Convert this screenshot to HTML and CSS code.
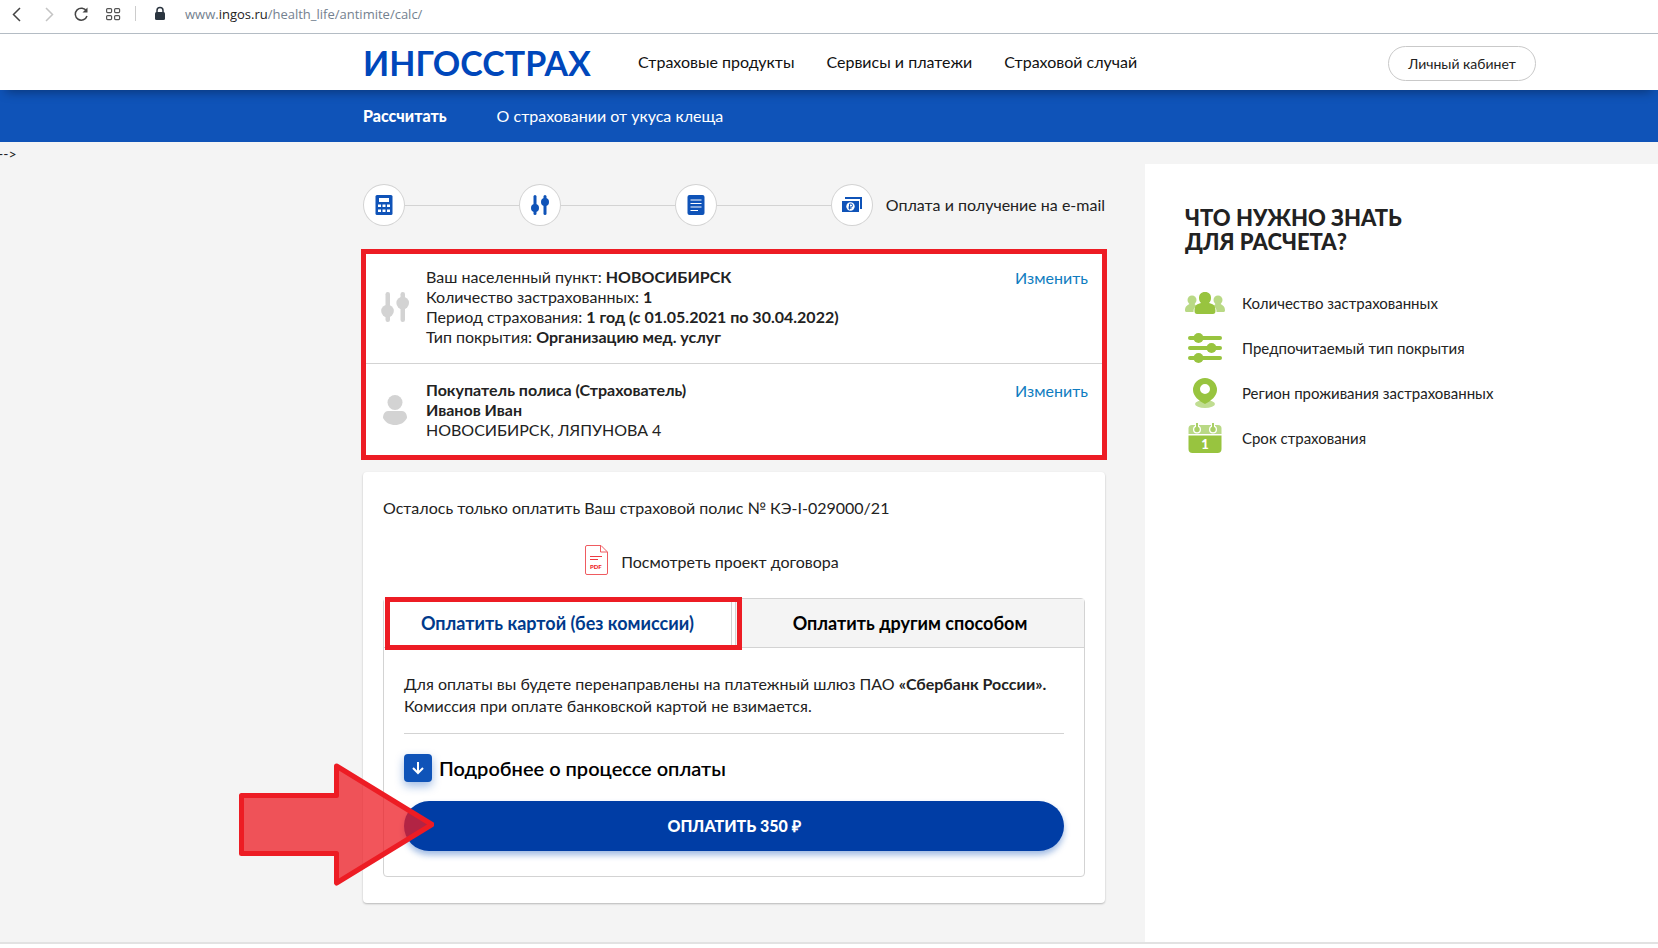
FILE: index.html
```html
<!DOCTYPE html>
<html lang="ru">
<head>
<meta charset="utf-8">
<title>Ингосстрах — оплата полиса</title>
<link rel="stylesheet" href="styles.css">
</head>
<body>
<div class="browser-bar">
  <button class="tool" aria-label="Назад"><svg width="22" height="22" viewBox="0 0 22 22"><path d="M14 5 7.500 11.500 14 18" fill="none" stroke="#444" stroke-width="1.500"/></svg></button>
  <button class="tool" aria-label="Вперёд"><svg width="22" height="22" viewBox="0 0 22 22"><path d="M8 5 14.500 11.500 8 18" fill="none" stroke="#c4c4c4" stroke-width="1.500"/></svg></button>
  <button class="tool" aria-label="Обновить"><svg width="22" height="22" viewBox="0 0 22 22"><path d="M16.500 8.200A6 6 0 1 0 17 13" fill="none" stroke="#444" stroke-width="1.500"/><path d="M17.500 4.500v5h-5z" fill="#444"/></svg></button>
  <button class="tool" aria-label="Плитка"><svg width="22" height="22" viewBox="0 0 22 22"><g fill="none" stroke="#555" stroke-width="1.200"><rect x="4.600" y="5.600" width="5" height="4" rx="1"/><rect x="12.600" y="5.600" width="5" height="4" rx="1"/><rect x="4.600" y="12.600" width="5" height="4" rx="1"/><rect x="12.600" y="12.600" width="5" height="4" rx="1"/></g></svg></button>
  <span class="bar-sep"></span>
  <svg class="lock" width="12" height="16" viewBox="0 0 12 16"><path d="M3 7V4.500a3 3 0 0 1 6 0V7" fill="none" stroke="#2b3540" stroke-width="1.500"/><rect x="1" y="6" width="10" height="8" rx="1.500" fill="#2b3540"/></svg>
  <span class="url">www.<b>ingos.ru</b>/health_life/antimite/calc/</span>
</div>

<header class="header">
  <a class="logo" href="#">ИНГОССТРАХ</a>
  <nav class="menu">
    <a href="#">Страховые продукты</a>
    <a href="#">Сервисы и платежи</a>
    <a href="#">Страховой случай</a>
  </nav>
  <button class="account">Личный кабинет</button>
</header>

<nav class="subnav">
  <a class="active" href="#">Рассчитать</a>
  <a href="#">О страховании от укуса клеща</a>
</nav>

<div class="stray">--&gt;</div>

<main class="page">
  <div class="content">
    <ol class="steps">
      <li class="step"><svg width="20" height="20" viewBox="0 0 20 20"><rect x="1.500" width="17" height="20" rx="1.500" fill="#0f53b8"/><path fill="#fff" d="M5 3h10v4H5zM4 9.500h3v2.500H4zM8.500 9.500h3v2.500h-3zM13 9.500h3v2.500h-3zM4 14.500h3V17H4zM8.500 14.500h3V17h-3zM13 14.500h3V17h-3z"/></svg></li>
      <li class="step"><svg width="20" height="20" viewBox="0 0 20 20"><g fill="#0f53b8"><rect x="3.500" width="3" height="20" rx="1.500"/><circle cx="5" cy="13" r="4"/><rect x="13.500" width="3" height="20" rx="1.500"/><circle cx="15" cy="7" r="4"/></g></svg></li>
      <li class="step"><svg width="20" height="20" viewBox="0 0 20 20"><rect x="1.500" width="17" height="20" rx="2" fill="#0f53b8"/><path d="M4.500 5H15.500M4.500 8.500H15.500M4.500 12H15.500M4.500 15.500H12" stroke="#fff" stroke-width="1.200"/></svg></li>
      <li class="step"><svg width="22" height="20" viewBox="0 0 22 20"><path fill="#0f53b8" d="M4 2h17v12h-2V4H4zM1 6h17v11H1z"/><circle cx="9.500" cy="11.500" r="4.200" fill="#fff"/><path d="M8.500 14.500v-5.500h1.500a1.500 1.500 0 0 1 0 3H7.500M7.500 13.200h3" fill="none" stroke="#0f53b8"/></svg></li>
      <li class="step-label">Оплата и получение на e-mail</li>
    </ol>

    <section class="summary">
      <div class="summary-row">
        <svg class="summary-icon" width="30" height="30" viewBox="0 0 30 30"><g fill="#d3d3d3"><rect x="5.500" width="4.500" height="30" rx="2.200"/><circle cx="7.500" cy="19" r="6.300"/><rect x="20.500" width="4.500" height="30" rx="2.200"/><circle cx="22.700" cy="11" r="6.300"/></g></svg>
        <p class="summary-text">Ваш населенный пункт: <b>НОВОСИБИРСК</b><br>Количество застрахованных: <b>1</b><br>Период страхования: <b>1 год (с 01.05.2021 по 30.04.2022)</b><br>Тип покрытия: <b>Организацию мед. услуг</b></p>
        <a class="edit" href="#">Изменить</a>
      </div>
      <div class="summary-row">
        <svg class="summary-icon" width="30" height="30" viewBox="0 0 30 30"><g fill="#d3d3d3"><circle cx="15" cy="7.500" r="7.500"/><path d="M8 16h14c3 0 5 3 5 7-3 5-7 7-12 7s-9-2-12-7c0-4 2-7 5-7z"/></g></svg>
        <p class="summary-text"><b>Покупатель полиса (Страхователь)</b><br><b>Иванов Иван</b><br>НОВОСИБИРСК, ЛЯПУНОВА 4</p>
        <a class="edit" href="#">Изменить</a>
      </div>
    </section>

    <section class="payment">
      <p class="policy">Осталось только оплатить Ваш страховой полис № КЭ-I-029000/21</p>
      <a class="draft" href="#">
        <svg width="24" height="30" viewBox="0 0 24 30"><path d="M2 .5H16L22.500 7V28q0 1.500-1.500 1.500H2Q.5 29.500.5 28V2Q.5.5 2 .5zM15.500 1V7H22" fill="none" stroke="#ef5b60"/><path d="M5 11.500H17M5 14.500H13" stroke="#ee3b42"/><text x="5" y="24" class="pdf-mark">PDF</text></svg>
        <span>Посмотреть проект договора</span>
      </a>
      <div class="tabs">
        <div class="tab-list" role="tablist">
          <button class="tab tab-active" role="tab" aria-selected="true">Оплатить картой (без комиссии)</button>
          <button class="tab" role="tab" aria-selected="false">Оплатить другим способом</button>
        </div>
        <div class="panel" role="tabpanel">
          <p class="panel-text">Для оплаты вы будете перенаправлены на платежный шлюз ПАО <b>«Сбербанк России».</b><br>Комиссия при оплате банковской картой не взимается.</p>
          <button class="details"><span class="details-icon"><svg width="14" height="14" viewBox="0 0 14 14"><path d="M7 1v11M2 7l5 5 5-5" fill="none" stroke="#fff" stroke-width="2"/></svg></span>Подробнее о процессе оплаты</button>
          <button class="pay">ОПЛАТИТЬ 350 ₽</button>
        </div>
      </div>
    </section>
  </div>

  <aside class="sidebar">
    <h2 class="sidebar-title">ЧТО НУЖНО ЗНАТЬ<br>ДЛЯ РАСЧЕТА?</h2>
    <ul class="facts">
      <li><svg width="40" height="32" viewBox="0 0 40 32"><g fill="#b9d985"><circle cx="7" cy="13" r="4.500"/><circle cx="33" cy="13" r="4.500"/><path d="M0 23.500c0-4 2-5 4.500-6.500h5l2 2c-2.500 1.500-3 3-3 6H2q-2 .2-2-1.500zM40 23.500c0-4-2-5-4.500-6.500h-5l-2 2c2.500 1.500 3 3 3 6H38q2 .2 2-1.500z"/></g><path fill="#98c43f" d="M20 5c4 0 6 2.500 6 6 0 2-.8 4-2 5 4.500 1 6.500 2.500 6.500 8 0 2-1 3-2.500 3H12c-1.500 0-2.500-1-2.500-3 0-5.500 2-7 6.500-8-1.200-1-2-3-2-5 0-3.500 2-6 6-6z"/></svg>Количество застрахованных</li>
      <li><svg width="40" height="32" viewBox="0 0 40 32"><g fill="#98c43f"><rect x="3" y="4" width="34" height="4" rx="2"/><circle cx="13.500" cy="6" r="5"/><rect x="3" y="14" width="34" height="4" rx="2"/><circle cx="26.500" cy="16" r="5"/><rect x="3" y="24" width="34" height="4" rx="2"/><circle cx="13.500" cy="26" r="5"/></g></svg>Предпочитаемый тип покрытия</li>
      <li><svg width="40" height="32" viewBox="0 0 40 32"><ellipse cx="20" cy="27" rx="10" ry="4" fill="#c0dd91"/><path fill="#98c43f" fill-rule="evenodd" d="M20 1a12 12 0 0 1 12 12c0 6-6 11-12 14C14 24 8 19 8 13A12 12 0 0 1 20 1zm0 6a5 5 0 1 0 0 10 5 5 0 0 0 0-10z"/></svg>Регион проживания застрахованных</li>
      <li><svg width="40" height="32" viewBox="0 0 40 32"><path fill="#b9d985" d="M7 3h26q3.500 0 3.500 3.500V12h-33V6.500Q3.500 3 7 3z"/><path fill="#98c43f" d="M3.500 13.500h33V27q0 4-4 4h-25q-4 0-4-4z"/><g fill="#fff"><circle cx="12" cy="7.500" r="4"/><circle cx="28" cy="7.500" r="4"/><path d="M10 1h4v6h-4zM26 1h4v6h-4z"/></g><g fill="#a9d066"><circle cx="12" cy="7.500" r="2.700"/><circle cx="28" cy="7.500" r="2.700"/><path d="M11 1h2v6h-2zM27 1h2v6h-2z"/></g><text x="20" y="27" class="day">1</text></svg>Срок страхования</li>
    </ul>
  </aside>
</main>
<svg class="pointer" width="196" height="124" viewBox="0 0 196 124"><path d="M3.500 33.500H98.500V4L194 62.500 98.500 121V91.500H3.500z" fill="#ed1c24" fill-opacity=".75" stroke="#ed1c24" stroke-width="5" stroke-linejoin="round"/></svg>
</body>
</html>
```

FILE: styles.css
```css
* { box-sizing: border-box; }
body {
  margin: 0;
  position: relative;
  background: #fff;
  color: #222;
  font: 16px/20px Lato, "Open Sans", sans-serif;
}
a { color: inherit; text-decoration: none; }
p, ol, ul, h2 { margin: 0; padding: 0; }
ol, ul { list-style: none; }
button { font: inherit; color: inherit; background: none; border: 0; padding: 0; cursor: pointer; }
svg { display: block; flex: none; }

.browser-bar {
  display: flex;
  align-items: center;
  height: 34px;
  padding: 0 6px 6px;
  border-bottom: 1px solid #b4bcc4;
}
.tool { margin-right: 10px; }
.bar-sep { width: 1px; height: 15px; margin-left: 1px; background: #ccc; }
.lock { margin: 0 19px 0 18px; }
.url { font: 13px/18px "Open Sans", sans-serif; color: #74818f; }
.url b { font-weight: 400; color: #222; }

.header {
  position: relative;
  display: flex;
  align-items: center;
  height: 56px;
  padding: 0 122px 0 363px;
  box-shadow: 0 8px 10px -6px rgba(0, 0, 0, .35);
}
.logo { width: 275px; padding-top: 2px; font-size: 34px; line-height: 40px; font-weight: 700; color: #0047bb; }
.menu { display: flex; gap: 32px; flex: 1; color: #111; }
.account {
  width: 148px;
  height: 35px;
  margin-top: 3px;
  border: 1px solid #c9c9c9;
  border-radius: 18px;
  font-size: 14px;
}

.subnav {
  display: flex;
  align-items: center;
  gap: 50px;
  height: 52px;
  padding-left: 363px;
  background: #0f53b8;
  color: #fff;
}
.subnav .active { font-weight: 900; }
.stray { height: 22px; margin-left: -2px; background: #f4f4f4; font-size: 14px; line-height: 24px; }

.page {
  display: grid;
  grid-template-columns: minmax(0, 742px) minmax(0, 1fr);
  gap: 40px;
  padding-left: 363px;
  background: #f4f4f4;
  border-bottom: 2px solid #e2e2e2;
}
.content { padding: 20px 0 39px; }

.steps { display: flex; align-items: center; }
.step {
  position: relative;
  display: grid;
  place-items: center;
  width: 42px;
  height: 42px;
  margin-right: 114px;
  border: 1px solid #d3d3d3;
  border-radius: 50%;
  background: #fff;
}
.step::after {
  content: "";
  position: absolute;
  left: 41px;
  width: 114px;
  height: 1px;
  background: #d3d3d3;
}
.step:nth-child(4) { margin-right: 13px; }
.step:nth-child(4)::after { display: none; }
.step-label { white-space: nowrap; }

.summary {
  margin-top: 25px;
  background: #fff;
  outline: 5px solid #ed1c24;
  outline-offset: -3px;
}
.summary-row {
  display: flex;
  align-items: flex-start;
  gap: 16px;
  padding: 16px 17px;
}
.summary-row + .summary-row { padding-bottom: 18px; border-top: 1px solid #d3d3d3; }
.summary-icon { align-self: center; }
.summary-text { flex: 1; }
.edit { padding-top: 1px; color: #0f7cc0; }

.payment {
  margin-top: 14px;
  padding: 26px 20px;
  background: #fff;
  border-radius: 4px;
  box-shadow: 0 1px 2px rgba(0, 0, 0, .25);
}
.draft {
  display: flex;
  align-items: center;
  justify-content: center;
  gap: 12px;
  margin-top: 27px;
  padding-right: 44px;
}
.draft span { padding-top: 3px; }
.pdf-mark { font: 900 6px Lato, sans-serif; fill: #ed1c24; }

.tabs { margin-top: 23px; border: 1px solid #d3d3d3; border-radius: 4px; }
.tab-list { display: grid; grid-template-columns: 348px 1fr; column-gap: 3px; border-bottom: 1px solid #d3d3d3; }
.tab {
  height: 48px;
  border-left: 1px solid #d3d3d3;
  background: #f4f4f4;
  font-size: 18px;
  font-weight: 700;
  color: #000;
}
.tab-active {
  position: relative;
  border-left: 0;
  border-right: 1px solid #d3d3d3;
  background: #fff;
  color: #003a8c;
}
/* Highlight frame around the chosen payment method */
.tab-active::after {
  content: "";
  position: absolute;
  inset: -2px -11px -3px 1px;
  border: 5px solid #ed1c24;
}
.panel { padding: 25px 20px; }
.panel-text { padding-bottom: 16px; border-bottom: 1px solid #d3d3d3; line-height: 22px; }
.details {
  display: flex;
  align-items: center;
  gap: 7px;
  margin: 20px 0 19px;
  font-size: 20px;
  font-weight: 600;
  color: #000;
}
.details-icon {
  display: grid;
  place-items: center;
  width: 28px;
  height: 28px;
  border-radius: 4px;
  background: #0f53b8;
  box-shadow: 0 4px 10px rgba(15, 83, 184, .4);
}
.pay {
  width: 100%;
  height: 50px;
  border-radius: 25px;
  background: #003da5;
  color: #fff;
  font-weight: 900;
  box-shadow: 0 4px 6px rgba(15, 83, 184, .4);
}

.sidebar { padding: 42px 40px; background: #fff; }
.sidebar-title { font-size: 22px; line-height: 24px; font-weight: 900; }
.facts { display: grid; gap: 13px; margin-top: 33px; font-size: 15px; }
.facts li { display: flex; align-items: center; gap: 17px; }
.day { font: 900 13px Lato, sans-serif; fill: #fff; text-anchor: middle; }

/* Callout drawn over the page, pointing at the pay button */
.pointer { position: absolute; left: 238px; top: 762px; }
```
